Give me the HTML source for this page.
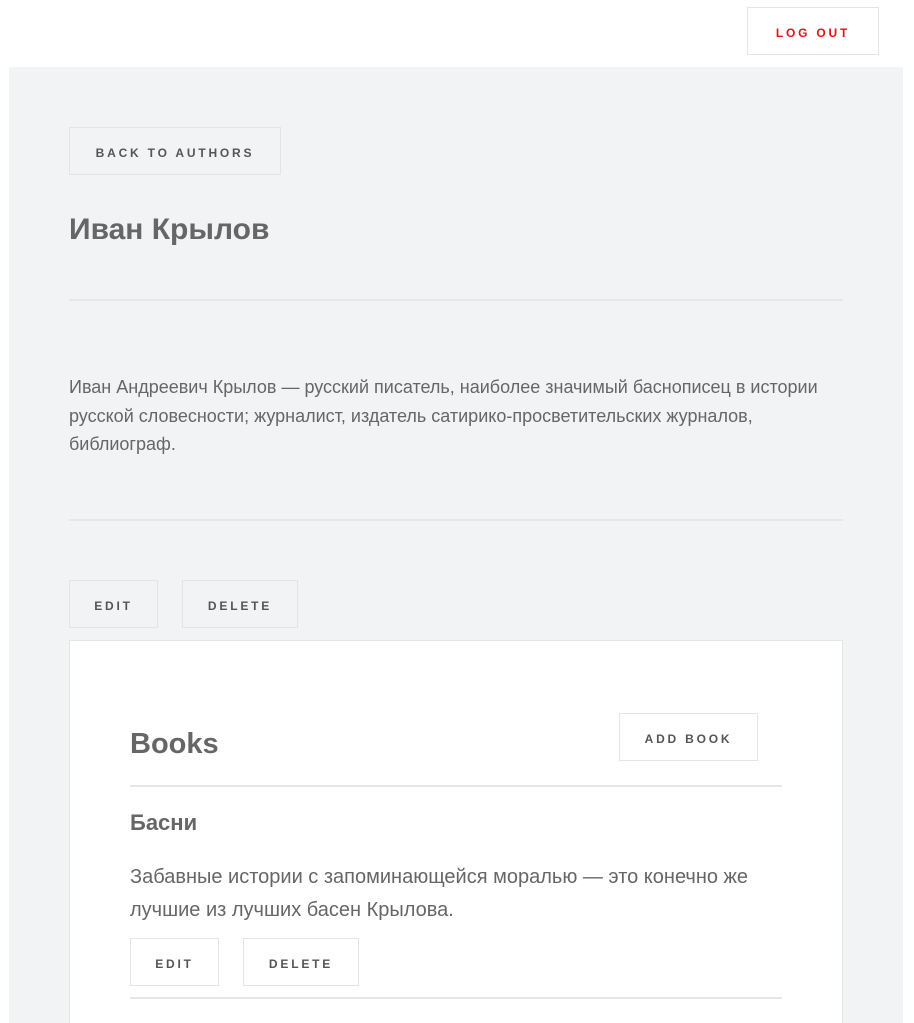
<!DOCTYPE html>
<html><head><meta charset="utf-8"><style>
*{box-sizing:border-box;margin:0;padding:0}
html,body{width:914px;height:1023px;overflow:hidden}
body{background:#fff;font-family:"Liberation Sans",sans-serif;color:#666;position:relative}
.a{position:absolute}
.btn{position:absolute;border:1px solid #e3e4e6;display:flex;align-items:center;justify-content:center;padding-top:3px;font-size:12px;font-weight:bold;letter-spacing:2.8px;color:#555}
.hr{position:absolute;height:2px;background:#e6e7e9}
</style></head><body>
<div class="btn" style="left:747px;top:7px;width:132px;height:48px;color:#e8101a;background:#fff">LOG OUT</div>
<div class="a" style="left:9px;top:67px;width:894px;height:956px;background:#f2f3f5"></div>
<div class="btn" style="left:69px;top:127px;width:212px;height:48px">BACK TO AUTHORS</div>
<div class="a" style="left:69px;top:212px;font-size:30px;font-weight:bold;line-height:36px">Иван Крылов</div>
<div class="hr" style="left:69px;top:299px;width:774px"></div>
<div class="a" style="left:69px;top:373px;width:774px;font-size:18px;line-height:28.5px">Иван Андреевич Крылов — русский писатель, наиболее значимый баснописец в истории русской словесности; журналист, издатель сатирико-просветительских журналов, библиограф.</div>
<div class="hr" style="left:69px;top:519px;width:774px"></div>
<div class="btn" style="left:69px;top:580px;width:89px;height:48px">EDIT</div>
<div class="btn" style="left:182px;top:580px;width:116px;height:48px">DELETE</div>
<div class="a" style="left:69px;top:640px;width:774px;height:400px;background:#fff;border:1px solid #e3e4e6"></div>
<div class="a" style="left:130px;top:726px;font-size:29px;font-weight:bold;line-height:36px">Books</div>
<div class="btn" style="left:619px;top:713px;width:139px;height:48px">ADD BOOK</div>
<div class="hr" style="left:130px;top:785px;width:652px"></div>
<div class="a" style="left:130px;top:809px;font-size:22px;font-weight:bold;line-height:28px">Басни</div>
<div class="a" style="left:130px;top:861px;width:652px;font-size:20px;line-height:33px">Забавные истории с запоминающейся моралью — это конечно же лучшие из лучших басен Крылова.</div>
<div class="btn" style="left:130px;top:938px;width:89px;height:48px">EDIT</div>
<div class="btn" style="left:243px;top:938px;width:116px;height:48px">DELETE</div>
<div class="hr" style="left:130px;top:997px;width:652px"></div>
</body></html>
